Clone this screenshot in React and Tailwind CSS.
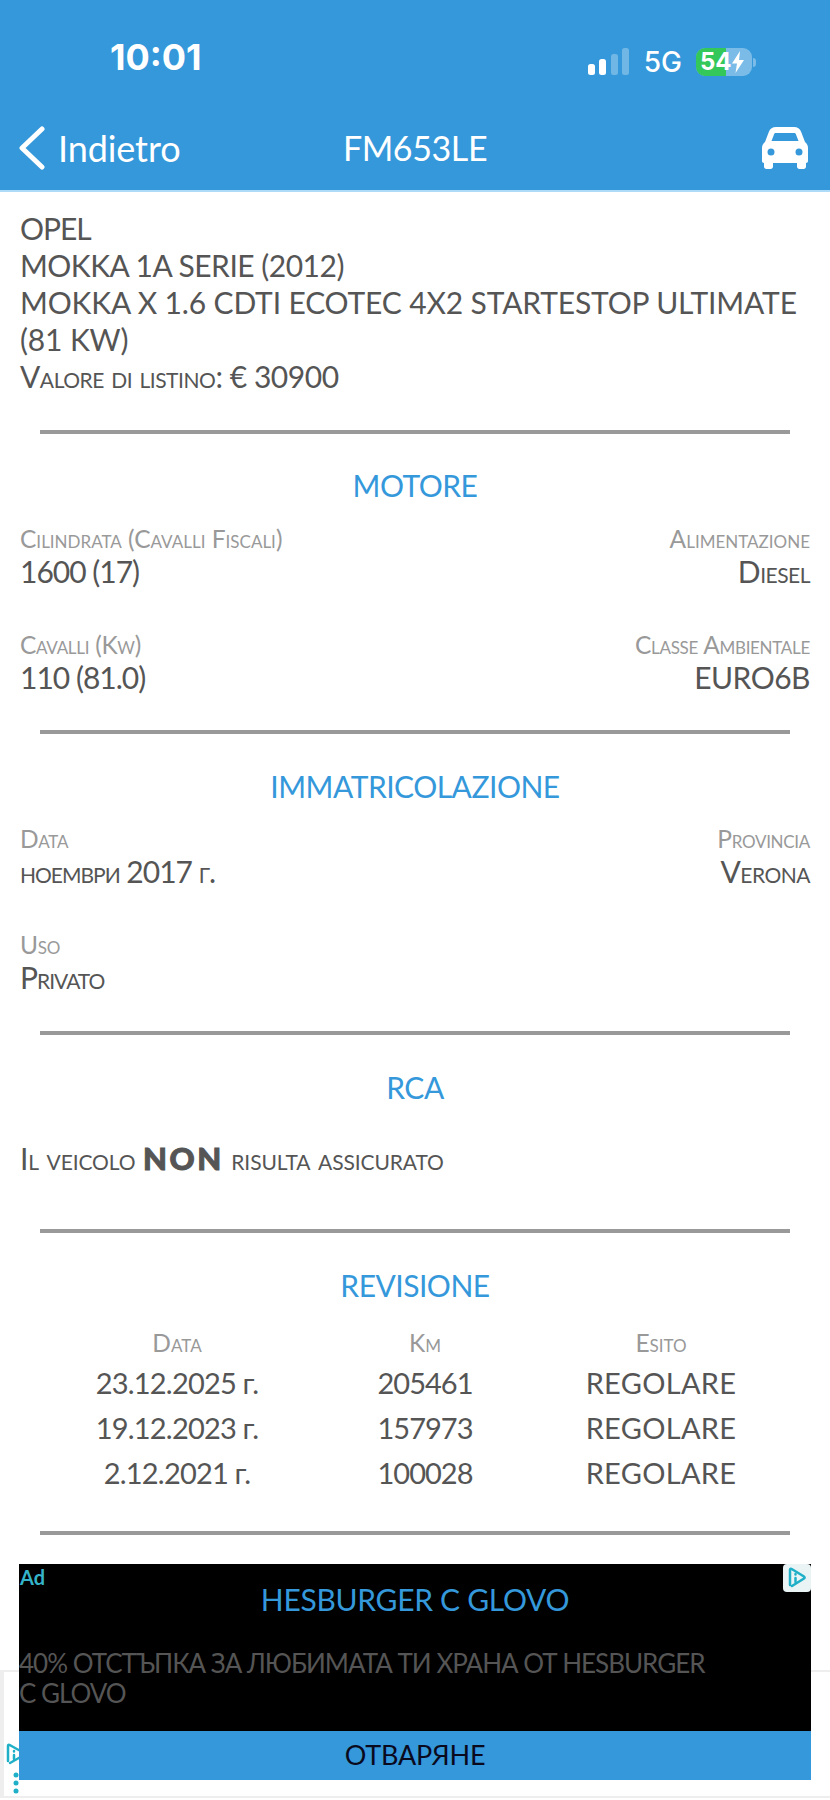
import React from "react";

const Divider = () => <div className="mx-[40px] h-[4px] bg-[#999999]" />;
const Title = ({ children }) => (
  <div className="text-center text-[30px] leading-[36px] text-[#3498db] tracking-[-0.5px]">{children}</div>
);
const Cell = ({ label, value, right, caps, tight, wide }) => (
  <div className={right ? "text-right" : ""}>
    <div className={"text-[24.500px] leading-[29px] text-[#999999] [font-variant:small-caps] " + (wide ? "tracking-[0px]" : "tracking-[-0.3px]")}>{label}</div>
    <div className={"text-[30px] leading-[36px] text-[#555555] " + (caps ? "[font-variant:small-caps] " : "") + (tight ? "tracking-[-1px]" : "tracking-[-0.5px]")}>{value}</div>
  </div>
);
const Row = ({ children, className = "" }) => (
  <div className={"flex justify-between px-[20px] " + className}>{children}</div>
);
const Rev = ({ a, b, c }) => (
  <div className="grid grid-cols-[314px_182px_290px] text-center text-[29px] leading-[45px] text-[#555555]">
    <div className="tracking-[-0.8px]">{a}</div>
    <div className="tracking-[-1px]">{b}</div>
    <div className="tracking-[0.3px]">{c}</div>
  </div>
);

export default function App() {
  return (
    <div className="relative h-[1800px] w-[830px] overflow-hidden bg-white font-['Lato',sans-serif]">
      <header className="h-[192px] bg-[#3498db] border-b-2 border-[#aedcf8] text-white">
        <div className="flex h-[106px] items-end pb-[29px]">
          <div className="ml-[110px] font-['Inter',sans-serif] text-[36px] font-bold leading-[40px]">10:01</div>
          <div className="ml-auto mr-[74px] flex items-center gap-[14px]">
            <svg width="42" height="28" viewBox="0 0 42 28" className="mb-[1px]">
              <rect x="0" y="16" width="7" height="11" rx="2.5" fill="#fff" />
              <rect x="11" y="11" width="7" height="16" rx="2.5" fill="#fff" />
              <rect x="23" y="6" width="7" height="21" rx="2.5" fill="#fff" opacity="0.3" />
              <rect x="34" y="0" width="7" height="27" rx="2.5" fill="#fff" opacity="0.3" />
            </svg>
            <span className="font-['Inter',sans-serif] text-[28px] font-medium leading-[30px]">5G</span>
            <div className="relative flex h-[28px] w-[56px] items-center overflow-hidden rounded-[9px] bg-white/35">
              <div className="absolute inset-y-0 left-0 w-[30px] bg-[#34c759]" />
              <span className="relative pl-[4px] font-['Inter',sans-serif] text-[24px] font-bold leading-[28px]">54</span>
              <svg width="14" height="22" viewBox="0 0 14 22" className="relative ml-[-1px]"><path d="M9 0 1 12.5h5L4.500 22 13 9H8z" fill="#fff" /></svg>
            </div>
            <div className="ml-[-13px] h-[9px] w-[3px] rounded-r-full bg-white/35" />
          </div>
        </div>
        <div className="relative flex h-[84px] items-center justify-between pl-[18px] pr-[22px]">
          <div className="flex items-center gap-[12px]">
            <svg width="28" height="44" viewBox="0 0 28 44" fill="none" stroke="#fff" strokeWidth="5" strokeLinecap="round" strokeLinejoin="round"><path d="M24 3 4 22l20 19" /></svg>
            <span className="text-[36px] tracking-[-0.1px]">Indietro</span>
          </div>
          <span className="absolute left-0 right-0 top-[21px] text-center text-[34px] leading-[42px] tracking-[-0.4px]">FM653LE</span>
          <svg width="46" height="42" viewBox="0 0 46 42" aria-hidden="true">
            <path fillRule="evenodd" fill="#fff" d="M14 0h18c3.500 0 6 1.800 7.200 5L43 15c2 1.500 3 3.500 3 6v13c0 1.200-.8 2-2 2v3.500c0 1.500-1 2.500-2.500 2.500h-4c-1.500 0-2.500-1-2.500-2.500V36H11v3.500C11 41 10 42 8.500 42h-4C3 42 2 41 2 39.500V36c-1.200 0-2-.8-2-2V21c0-2.500 1-4.500 3-6L6.800 5C8 1.800 10.500 0 14 0zM14 6c-1 0-1.600.4-2 1.400L9.500 14h27L34 7.400C33.600 6.400 33 6 32 6zM9 21.500a3.500 3.500 0 1 0 0 7 3.500 3.500 0 0 0 0-7zM37 21.500a3.500 3.500 0 1 0 0 7 3.500 3.500 0 0 0 0-7z" />
          </svg>
        </div>
      </header>

      <section className="px-[20px] pt-[18px] text-[30px] leading-[37px] text-[#555555] tracking-[-0.15px]">
        <div className="tracking-[-1px]">OPEL</div>
        <div className="tracking-[-0.5px]">MOKKA 1A SERIE (2012)</div>
        <div>MOKKA X 1.6 CDTI ECOTEC 4X2 STARTESTOP ULTIMATE</div>
        <div>(81 KW)</div>
        <div className="[font-variant:small-caps] tracking-[-0.45px]">Valore di listino: € 30900</div>
      </section>

      <div className="mt-[35px]"><Divider /></div>
      <div className="mt-[33px]"><Title>MOTORE</Title></div>
      <Row className="mt-[21px]">
        <Cell tight wide label="Cilindrata (Cavalli Fiscali)" value="1600 (17)" />
        <Cell right caps wide label="Alimentazione" value="Diesel" />
      </Row>
      <Row className="mt-[41px]">
        <Cell tight label="Cavalli (Kw)" value="110 (81.0)" />
        <Cell right label="Classe Ambientale" value="EURO6B" />
      </Row>

      <div className="mt-[35px]"><Divider /></div>
      <div className="mt-[34px]"><Title>IMMATRICOLAZIONE</Title></div>
      <Row className="mt-[20px]">
        <Cell caps tight label="Data" value="ноември 2017 г." />
        <Cell right caps label="Provincia" value="Verona" />
      </Row>
      <Row className="mt-[41px]">
        <Cell caps tight label="Uso" value="Privato" />
      </Row>

      <div className="mt-[36px]"><Divider /></div>
      <div className="mt-[34px]"><Title>RCA</Title></div>
      <div className="mt-[33px] px-[20px] text-[30px] leading-[40px] text-[#555555] [font-variant:small-caps] tracking-[-0.1px]">
        Il veicolo <b className="text-[31px] font-black tracking-[2.5px] [-webkit-text-stroke:1px_#555555]">NON</b> risulta assicurato
      </div>

      <div className="mt-[51px]"><Divider /></div>
      <div className="mt-[34px]"><Title>REVISIONE</Title></div>
      <div className="mt-[25px] px-[20px]">
        <div className="grid grid-cols-[314px_182px_290px] pb-[3px] text-center text-[24.500px] leading-[29px] text-[#999999] [font-variant:small-caps]">
          <div>Data</div><div>Km</div><div>Esito</div>
        </div>
        <Rev a="23.12.2025 г." b="205461" c="REGOLARE" />
        <Rev a="19.12.2023 г." b="157973" c="REGOLARE" />
        <Rev a="2.12.2021 г." b="100028" c="REGOLARE" />
      </div>
      <div className="mt-[36px]"><Divider /></div>

      <div className="absolute inset-x-0 top-[1670px] h-[128px] border-y-2 border-l-4 border-[#eeeeee]" />
      <div className="relative z-10 mx-[19px] mt-[29px] h-[216px] bg-black">
        <div className="absolute left-[1px] top-[1px] text-[20px] font-bold leading-[24px] text-[#35b4c9]">Ad</div>
        <div className="absolute right-0 top-0 flex h-[28px] w-[28px] items-center justify-center rounded-[4px] bg-[#eaf4f5]">
          <svg width="20" height="24" viewBox="0 0 20 24" fill="none" stroke="#1fb0c7" strokeWidth="2.500" strokeLinejoin="round" strokeLinecap="round"><path d="M3 19V4c0-1 .8-1.500 1.700-1L17 10.500c.8.500.8 1.500 0 2L5 20" /><path d="M8.500 8v.5M8.500 12v4" /></svg>
        </div>
        <div className="pt-[15px] text-center text-[30px] leading-[40px] text-[#3498db] tracking-[-0.3px]">HESBURGER С GLOVO</div>
        <div className="mt-[29px] w-[700px] text-[26px] leading-[30px] text-[#555555] tracking-[-1px]">40% ОТСТЪПКА ЗА ЛЮБИМАТА ТИ ХРАНА ОТ HESBURGER С GLOVO</div>
        <div className="absolute inset-x-0 top-[167px] flex h-[49px] items-center justify-center bg-[#3498db] text-[27px] text-[#0a0a1e] tracking-[-0.2px]">ОТВАРЯНЕ</div>
      </div>
      <svg width="22" height="58" viewBox="0 0 22 58" className="absolute left-[5px] top-[1742px]" fill="none" stroke="#1fb0c7" strokeWidth="2.500" strokeLinejoin="round" strokeLinecap="round">
        <path d="M3 19V4c0-1 .8-1.500 1.700-1L19 11c.8.500.8 1.500 0 2L5 21" />
        <path d="M9 9v.5M9 13v4" />
        <circle cx="11" cy="33" r="2.500" fill="#1fb0c7" stroke="none" />
        <circle cx="11" cy="41" r="2.500" fill="#1fb0c7" stroke="none" />
        <circle cx="11" cy="49" r="2.500" fill="#1fb0c7" stroke="none" />
      </svg>
    </div>
  );
}
